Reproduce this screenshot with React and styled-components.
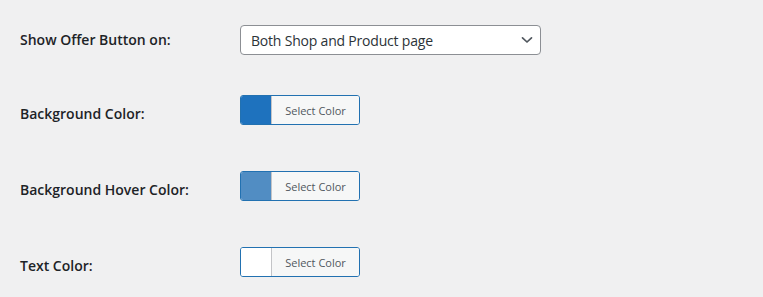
import React from "react";
import styled, { createGlobalStyle } from "styled-components";

const Global = createGlobalStyle`
  html, body { margin: 0; padding: 0; background: #f0f0f1; }
  body {
    font-family: "Open Sans", "Noto Sans", sans-serif;
    color: #1d2327;
    font-size: 14px;
  }
`;

const Page = styled.div`
  padding-left: 20px;
  width: 743px;
`;

const Row = styled.div`
  display: grid;
  grid-template-columns: 220px 1fr;
  align-items: start;
  height: ${(p) => p.$h}px;
`;

const Label = styled.div`
  font-weight: 600;
  font-size: 14px;
  line-height: 18px;
  padding-top: ${(p) => p.$top}px;
  color: #1d2327;
`;

const Control = styled.div`
  padding-top: 25px;
  display: flex;
`;

const SelectBox = styled.div`
  box-sizing: border-box;
  width: 301px;
  height: 30px;
  border: 1px solid #8c8f94;
  border-radius: 4px;
  background: #fff;
  display: flex;
  align-items: center;
  justify-content: space-between;
  padding: 0 7px 0 10px;
  font-size: 14px;
  letter-spacing: -0.2px;
  color: #2c3338;
`;

const Chevron = () => (
  <svg width="12" height="8" viewBox="0 0 12 8" fill="none">
    <path d="M1.5 1.8 L6 6 L10.5 1.8" stroke="#50575e" strokeWidth="1.7" strokeLinecap="round" strokeLinejoin="round" />
  </svg>
);

const ColorButton = styled.div`
  box-sizing: border-box;
  width: 120px;
  height: 30px;
  border: 1px solid #2271b1;
  border-radius: 3px;
  display: flex;
  overflow: hidden;
  background: #f6f7f7;
`;

const Swatch = styled.div`
  width: 30px;
  flex: none;
  background: ${(p) => p.$color};
`;

const ButtonText = styled.div`
  flex: 1;
  border-left: 1px solid #c3c4c7;
  display: flex;
  align-items: center;
  justify-content: center;
  font-size: 11px;
  color: #50575e;
  background: #f6f7f7;
`;

const colorRows = [
  { label: "Background Color:", color: "#1e72be", h: 76 },
  { label: "Background Hover Color:", color: "#518dc3", h: 76 },
  { label: "Text Color:", color: "#ffffff", h: 75 },
];

export default function App() {
  return (
    <>
      <Global />
      <Page>
        <Row $h={70}>
          <Label $top={31}>Show Offer Button on:</Label>
          <Control>
            <SelectBox>
              <span>Both Shop and Product page</span>
              <Chevron />
            </SelectBox>
          </Control>
        </Row>
        {colorRows.map((r) => (
          <Row key={r.label} $h={r.h}>
            <Label $top={35}>{r.label}</Label>
            <Control>
              <ColorButton>
                <Swatch $color={r.color} />
                <ButtonText>Select Color</ButtonText>
              </ColorButton>
            </Control>
          </Row>
        ))}
      </Page>
    </>
  );
}
